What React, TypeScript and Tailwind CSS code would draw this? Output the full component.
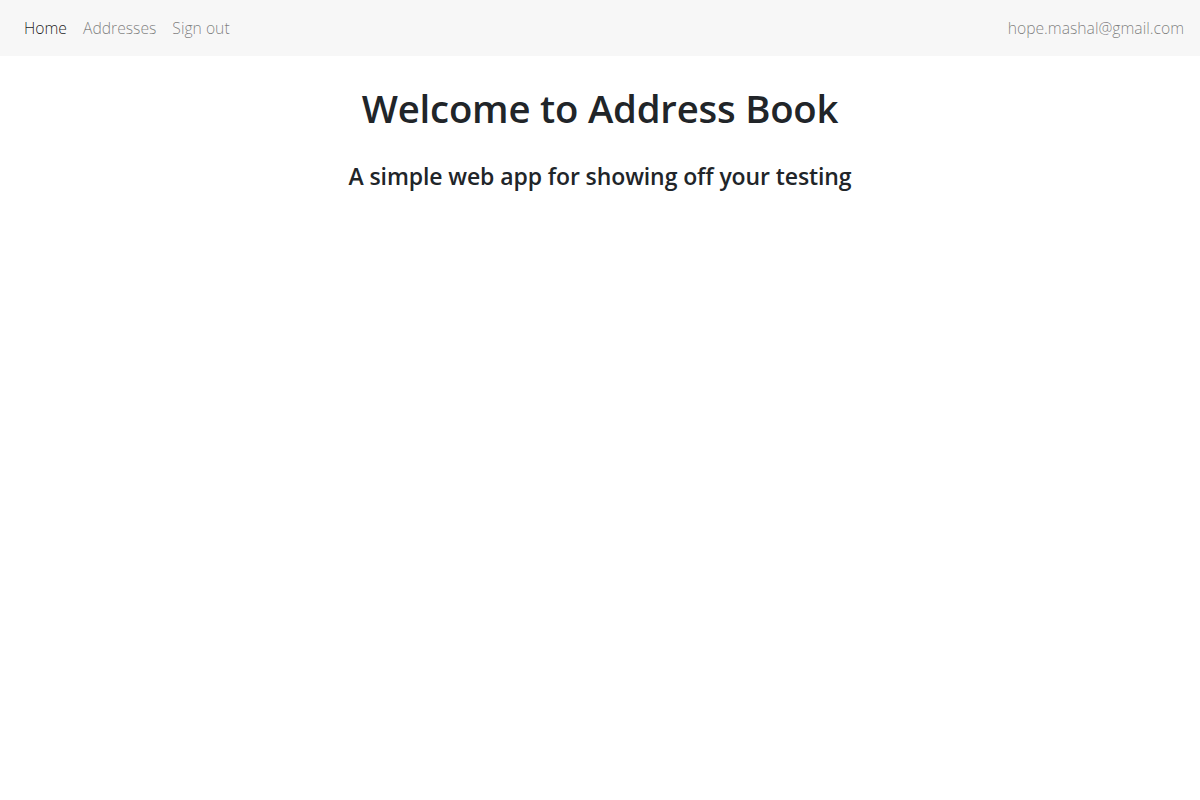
export default function App() {
  return (
    <div
      className="min-h-[800px] bg-white text-[#212529]"
      style={{ fontFamily: '"Open Sans", "Noto Sans", sans-serif' }}
    >
      {/* Navbar */}
      <nav className="h-14 bg-[#f7f7f7] flex items-center justify-between px-4 pt-px">
        <div className="flex items-center text-[15.7px] font-light">
          <a className="px-2 py-2 text-black/90">Home</a>
          <a className="px-2 py-2 text-black/50">Addresses</a>
          <a className="px-2 py-2 text-black/50">Sign out</a>
        </div>
        <span className="text-[15.7px] font-light text-black/50">hope.mashal@gmail.com</span>
      </nav>

      {/* Content */}
      <div className="flex flex-col items-center pt-[30px]">
        <h1 className="text-[38.3px] font-semibold leading-[1.2] tracking-[-0.2px]">
          Welcome to Address Book
        </h1>
        <h4 className="mt-[31px] text-[23px] font-semibold leading-[1.2] tracking-[-0.1px]">
          A simple web app for showing off your testing
        </h4>
      </div>
    </div>
  );
}
